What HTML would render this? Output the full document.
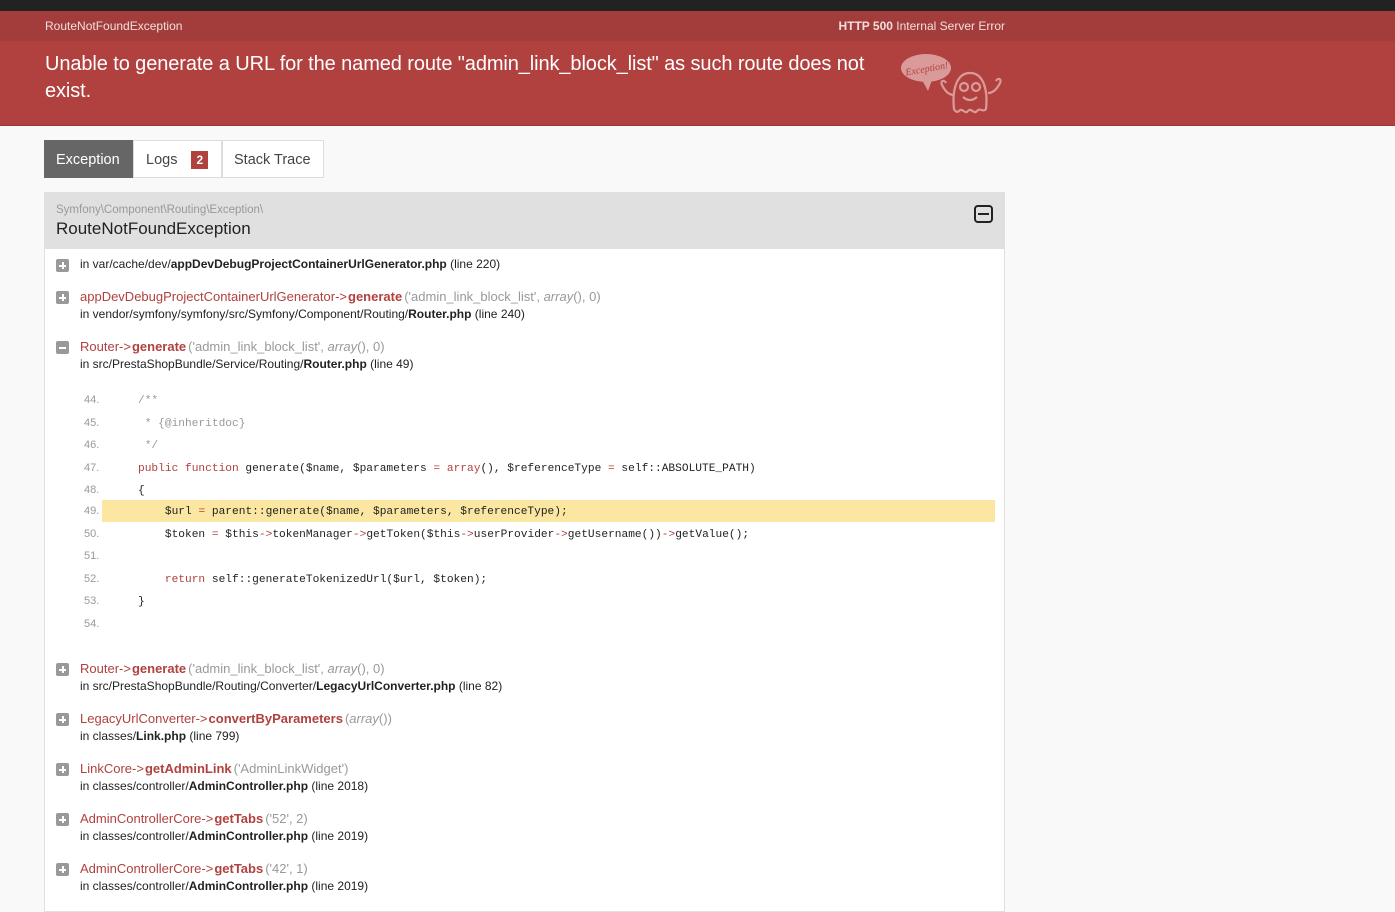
<!DOCTYPE html>
<html><head><meta charset="utf-8"><style>
*{margin:0;padding:0;box-sizing:border-box}
body{width:1395px;height:888px;overflow:hidden;background:#f9f9f9;font-family:"Liberation Sans",sans-serif;color:#222;position:relative}
.top{position:absolute;left:0;top:0;width:1395px;height:11px;background:#222}
.sub{position:absolute;left:0;top:11px;width:1395px;height:30px;background:#a33d3c;color:#f2dede;font-size:12px}
.sub .l{position:absolute;left:45px;top:8px}
.sub .r{position:absolute;right:390px;top:8px}
.hdr{position:absolute;left:0;top:41px;width:1395px;height:85px;background:#b0413e;border-bottom:1px solid #9c3a37}
.hdr h1{position:absolute;left:45px;top:10px;width:830px;font-weight:normal;font-size:20px;line-height:27px;color:#fff;letter-spacing:-0.1px}
.tabs{position:absolute;left:44px;top:140px;height:38px;display:flex}
.tab{height:38px;line-height:38px;padding:0 11px;font-size:14.5px;background:#fff;border:1px solid #ddd;color:#444}
.tab.a{background:#666;color:#fff;border-color:#666;width:89px}
.tab.lg{width:89px;padding-left:12px}
.tab.st{width:102px}
.badge{display:inline-block;background:#b0413e;color:#fff;font-size:12px;font-weight:bold;padding:0 5px;line-height:18px;margin-left:10px}
.box{position:absolute;left:44px;top:192px;width:961px;height:720px;background:#fff;border:1px solid #e0e0e0}
.bh{height:56px;background:#e0e0e0;position:relative}
.ns{position:absolute;left:11px;top:11px;font-size:11.5px;color:#999}
.cl{position:absolute;left:11px;top:26px;font-size:17px;color:#222}
.tr{position:absolute;left:80px;font-size:12px;color:#222;white-space:nowrap}
.fn{font-size:13px;color:#b0413e}
.fn b{color:#b0413e;margin:0 2px 0 1px}
.fn .g{color:#999}
.ic{position:absolute;left:56px;width:13px;height:13px;background:#999;border-radius:2px}
.ic:before{content:"";position:absolute;left:3px;top:5.5px;width:7px;height:2px;background:#fff}
.ic.p:after{content:"";position:absolute;left:5.5px;top:3px;width:2px;height:7px;background:#fff}
.code{position:absolute;left:80px;font-family:"Liberation Mono",monospace;font-size:11.2px;color:#222;white-space:pre;height:22px;line-height:22px;width:915px}
.code .n{display:inline-block;width:58px;color:#999;font-family:"Liberation Sans",sans-serif;font-size:11px;padding-left:4px}
.code.h{background:linear-gradient(to right,transparent 22px,#fbe7a1 22px)}
.k{color:#b0413e}.c{color:#999}
</style></head><body>
<div class="top"></div>
<div class="sub"><span class="l">RouteNotFoundException</span><span class="r"><b>HTTP 500</b> Internal Server Error</span></div>
<div class="hdr"><h1>Unable to generate a URL for the named route "admin_link_block_list" as such route does not exist.</h1>
<svg style="position:absolute;left:900px;top:10px" width="106" height="64" viewBox="0 0 106 64">
<ellipse cx="26" cy="17" rx="25" ry="14" fill="#d99a99"/><path d="M22 29 L28 40 L32 29Z" fill="#d99a99"/>
<text x="5" y="21" font-family="Liberation Serif" font-style="italic" font-size="10" fill="#b0413e" transform="rotate(-10 26 17)">Exception!</text>
<g fill="none" stroke="#d99a99" stroke-width="2.2"><path d="M54 58 C52 40 56 22 70 22 C84 22 88 40 86 58 C83 62 80 56 77 60 C74 64 71 56 68 60 C65 64 62 56 59 60 C57 62 55 60 54 58Z"/><path d="M54 44 C48 44 44 38 42 34 M42 34 C40 30 44 28 46 32 M88 42 C94 42 98 36 100 32 M100 32 C102 28 98 26 96 30"/><circle cx="64" cy="36" r="4"/><circle cx="76" cy="36" r="4"/><path d="M63 46 Q70 52 77 46"/></g></svg>
</div>
<div class="tabs"><div class="tab a">Exception</div><div class="tab lg">Logs <span class="badge">2</span></div><div class="tab st">Stack Trace</div></div>
<div class="box"><div class="bh"><div class="ns">Symfony\Component\Routing\Exception\</div><div class="cl">RouteNotFoundException</div>
<svg style="position:absolute;left:929px;top:12px" width="19" height="18" viewBox="0 0 19 18"><rect x="1" y="1" width="17" height="16" rx="3" fill="none" stroke="#222" stroke-width="2"/><rect x="4" y="8" width="11" height="2" fill="#222"/></svg></div></div>

<div class="ic p" style="top:259px"></div><div class="tr" style="top:257px">in var/cache/dev/<b>appDevDebugProjectContainerUrlGenerator.php</b> (line 220)</div>
<div class="ic p" style="top:291px"></div><div class="tr fn" style="top:289px">appDevDebugProjectContainerUrlGenerator-&gt;<b>generate</b><span class="g">('admin_link_block_list', <i>array</i>(), 0)</span></div>
<div class="tr" style="top:307px">in vendor/symfony/symfony/src/Symfony/Component/Routing/<b>Router.php</b> (line 240)</div>
<div class="ic" style="top:341px"></div><div class="tr fn" style="top:339px">Router-&gt;<b>generate</b><span class="g">('admin_link_block_list', <i>array</i>(), 0)</span></div>
<div class="tr" style="top:357px">in src/PrestaShopBundle/Service/Routing/<b>Router.php</b> (line 49)</div>

<div class="code" style="top:389px"><span class="n">44.</span><span class="c">/**</span></div>
<div class="code" style="top:412px"><span class="n">45.</span> <span class="c">* {@inheritdoc}</span></div>
<div class="code" style="top:434px"><span class="n">46.</span> <span class="c">*/</span></div>
<div class="code" style="top:457px"><span class="n">47.</span><span class="k">public function</span> generate($name, $parameters <span class="k">=</span> <span class="k">array</span>(), $referenceType <span class="k">=</span> self::ABSOLUTE_PATH)</div>
<div class="code" style="top:479px"><span class="n">48.</span>{</div>
<div class="code h" style="top:500px"><span class="n">49.</span>    $url <span class="k">=</span> parent::generate($name, $parameters, $referenceType);</div>
<div class="code" style="top:523px"><span class="n">50.</span>    $token <span class="k">=</span> $this<span class="k">-&gt;</span>tokenManager<span class="k">-&gt;</span>getToken($this<span class="k">-&gt;</span>userProvider<span class="k">-&gt;</span>getUsername())<span class="k">-&gt;</span>getValue();</div>
<div class="code" style="top:545px"><span class="n">51.</span></div>
<div class="code" style="top:568px"><span class="n">52.</span>    <span class="k">return</span> self::generateTokenizedUrl($url, $token);</div>
<div class="code" style="top:590px"><span class="n">53.</span>}</div>
<div class="code" style="top:613px"><span class="n">54.</span></div>

<div class="ic p" style="top:663px"></div><div class="tr fn" style="top:661px">Router-&gt;<b>generate</b><span class="g">('admin_link_block_list', <i>array</i>(), 0)</span></div>
<div class="tr" style="top:679px">in src/PrestaShopBundle/Routing/Converter/<b>LegacyUrlConverter.php</b> (line 82)</div>
<div class="ic p" style="top:713px"></div><div class="tr fn" style="top:711px">LegacyUrlConverter-&gt;<b>convertByParameters</b><span class="g">(<i>array</i>())</span></div>
<div class="tr" style="top:729px">in classes/<b>Link.php</b> (line 799)</div>
<div class="ic p" style="top:763px"></div><div class="tr fn" style="top:761px">LinkCore-&gt;<b>getAdminLink</b><span class="g">('AdminLinkWidget')</span></div>
<div class="tr" style="top:779px">in classes/controller/<b>AdminController.php</b> (line 2018)</div>
<div class="ic p" style="top:813px"></div><div class="tr fn" style="top:811px">AdminControllerCore-&gt;<b>getTabs</b><span class="g">('52', 2)</span></div>
<div class="tr" style="top:829px">in classes/controller/<b>AdminController.php</b> (line 2019)</div>
<div class="ic p" style="top:863px"></div><div class="tr fn" style="top:861px">AdminControllerCore-&gt;<b>getTabs</b><span class="g">('42', 1)</span></div>
<div class="tr" style="top:879px">in classes/controller/<b>AdminController.php</b> (line 2019)</div>
</body></html>
